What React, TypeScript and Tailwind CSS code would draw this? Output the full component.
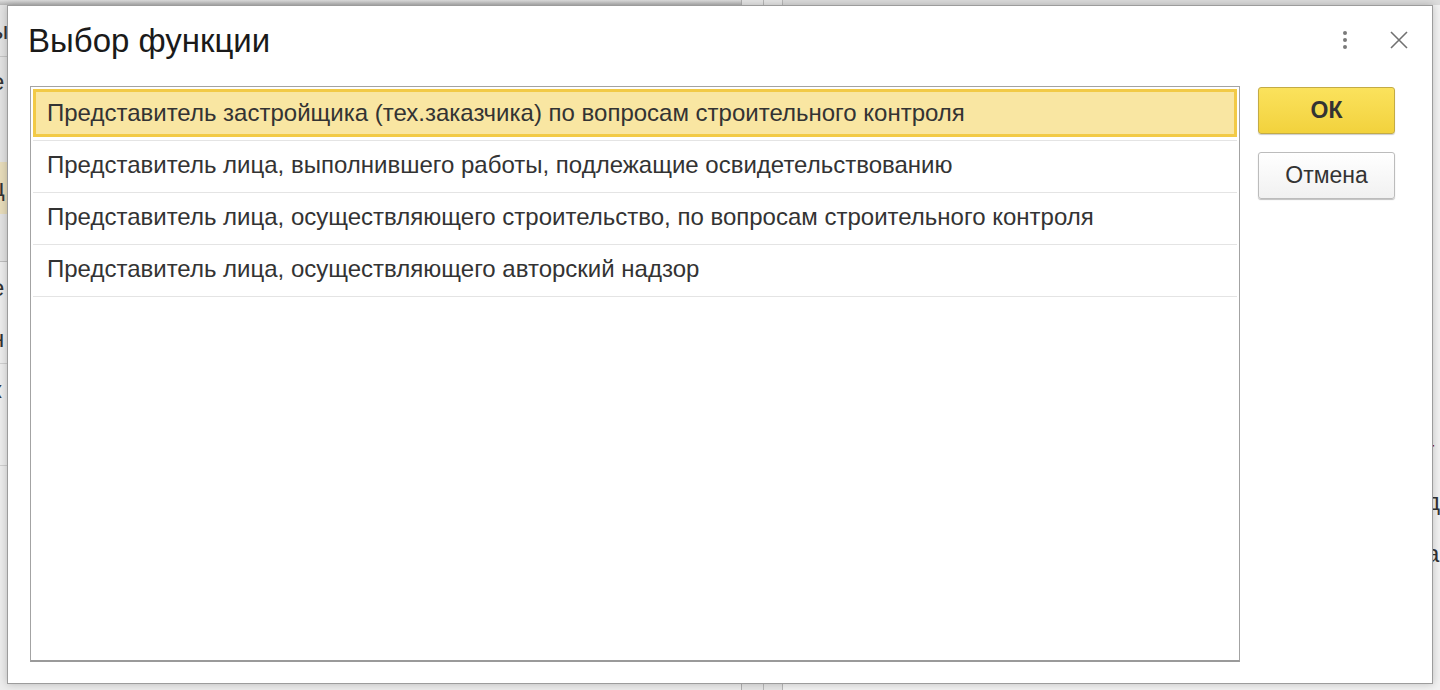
import React from 'react';

const rows = [
  'Представитель застройщика (тех.заказчика) по вопросам строительного контроля',
  'Представитель лица, выполнившего работы, подлежащие освидетельствованию',
  'Представитель лица, осуществляющего строительство, по вопросам строительного контроля',
  'Представитель лица, осуществляющего авторский надзор',
];

const font = { fontFamily: '"Liberation Sans", Arial, sans-serif' };

function Backdrop() {
  return (
    <div className="flex h-full w-full">
      {/* left form behind the dialog */}
      <div className="flex w-[746px] flex-col border-r border-[#b0b0b0] bg-[#e2e2e2] text-[24px] text-[#333]">
        <div className="h-[5px] bg-gradient-to-b from-[#dedede] to-[#b4b4b4]" />
        <div className="flex h-[52px] items-center border-b border-[#c4c4c4] leading-none">
          <span className="-ml-[9px]">ы</span>
        </div>
        <div className="flex h-[50px] items-center leading-none">
          <span className="-ml-[9px]">е</span>
        </div>
        <div className="h-[55px]" />
        <div className="flex h-[52px] items-center bg-[#e7dcba] leading-none">
          <span className="-ml-[9px]">ц</span>
        </div>
        <div className="h-[48px] border-b border-[#bdbdbd]" />
        <div className="flex h-[52px] items-center bg-[#ececec] leading-none">
          <span className="-ml-[9px]">е</span>
        </div>
        <div className="flex h-[50px] items-center border-b border-[#cfcfcf] bg-[#ececec] leading-none">
          <span className="-ml-[9px]">н</span>
        </div>
        <div className="flex h-[52px] items-center bg-[#ececec] leading-none">
          <span className="-ml-[9px]">к</span>
        </div>
        <div className="h-[50px] border-b border-[#cfcfcf] bg-[#ececec]" />
        <div className="flex-1 bg-[#ececec]" />
      </div>
      <div className="w-[22px] border-r border-[#b8b8b8] bg-[#e6e6e6]" />
      <div className="w-[19px] border-r border-[#b8b8b8] bg-[#e6e6e6]" />
      <div className="flex flex-1 flex-col bg-[#f2f2f2] text-[24px] leading-none">
        <div className="h-[5px] bg-[#dcdcdc]" />
        <div className="h-[419px]" />
        <div className="flex h-[52px] items-center pl-[643px] text-[#8b1a1a]">г</div>
        <div className="flex h-[52px] items-center pl-[643px] text-[#333]">д</div>
        <div className="flex h-[52px] items-center pl-[643px] text-[#333]">а</div>
      </div>
    </div>
  );
}

function Kebab() {
  return (
    <svg width="8" height="20" viewBox="0 0 8 20" fill="#7a7a7a">
      <circle cx="4" cy="3" r="2" />
      <circle cx="4" cy="10" r="2" />
      <circle cx="4" cy="17" r="2" />
    </svg>
  );
}

function CloseIcon() {
  return (
    <svg width="18" height="18" viewBox="0 0 18 18" stroke="#717171" strokeWidth="1.6" fill="none">
      <path d="M1 1 L17 17 M17 1 L1 17" />
    </svg>
  );
}

export default function App() {
  return (
    <div className="relative h-[690px] w-[1440px] overflow-hidden bg-[#e6e6e6]" style={font}>
      <Backdrop />

      {/* dialog */}
      <div className="absolute left-[7px] top-[5px] flex h-[679px] w-[1426px] flex-col border border-[#9c9c9c] bg-white shadow-[0_0_8px_rgba(0,0,0,0.22)]">
        <div className="flex h-[53px] items-end pl-[20px] pr-[24px]">
          <h1 className="flex-1 text-[33px] leading-[36px] text-[#1a1a1a]">Выбор функции</h1>
          <div className="mb-[9px] flex items-center gap-[41px]">
            <Kebab />
            <CloseIcon />
          </div>
        </div>

        <div className="mt-[27px] flex flex-1 pb-[21px] pl-[22px] pr-[37px]">
          <div className="flex w-[1211px] flex-col border border-b-2 border-[#a3a3a3] border-b-[#9a9a9a] p-[2px]">
            {rows.map((r, i) => (
              <div key={i} className="h-[52px] border-b border-[#e4e4e4] pb-[3px]">
                <div
                  className={
                    i === 0
                      ? 'flex h-full items-center border-[3px] border-[#f2ca46] bg-[#f9e6a2] pl-[11px] text-[24px] text-[#333]'
                      : 'flex h-full items-center border-[3px] border-transparent pl-[11px] text-[24px] text-[#333]'
                  }
                >
                  {r}
                </div>
              </div>
            ))}
          </div>

          <div className="ml-[18px] flex w-[137px] flex-col gap-[18px] pt-[1px]">
            <button className="h-[47px] rounded-[3px] border border-[#c3ab45] bg-gradient-to-b from-[#fbe25c] to-[#f2d23c] text-[23px] font-bold text-[#333] shadow-[0_1px_1px_rgba(0,0,0,0.2)]">
              ОК
            </button>
            <button className="h-[47px] rounded-[3px] border border-[#bcbcbc] bg-gradient-to-b from-white to-[#f1f1f1] text-[23px] text-[#333] shadow-[0_1px_1px_rgba(0,0,0,0.25)]">
              Отмена
            </button>
          </div>
        </div>
      </div>
    </div>
  );
}
